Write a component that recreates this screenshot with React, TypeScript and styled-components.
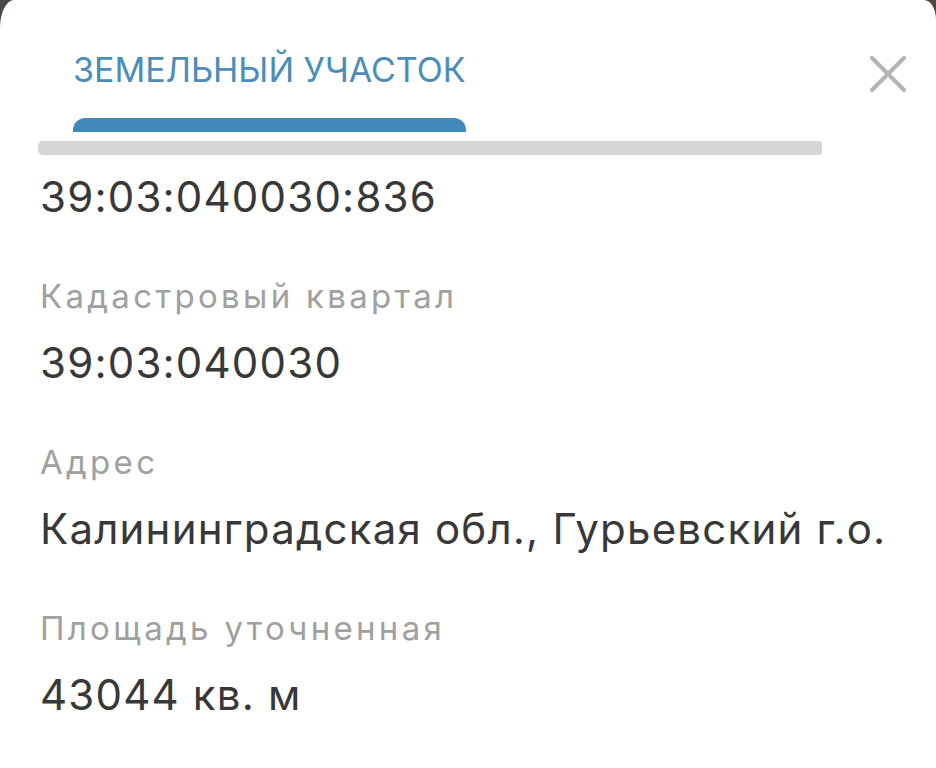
import { FC } from 'react'
import styled, { createGlobalStyle } from 'styled-components'

const GlobalStyle = createGlobalStyle`
  html, body {
    margin: 0;
    padding: 0;
    background: #4d4746;
  }
  body {
    font-family: Inter, "Noto Sans", "Liberation Sans", sans-serif;
    -webkit-font-smoothing: antialiased;
  }
`

const Sheet = styled.div`
  width: 936px;
  height: 768px;
  overflow: hidden;
  background: #fff;
  border-top-left-radius: 14px 28px;
  border-top-right-radius: 12px 20px;
  box-sizing: border-box;
`

const Header = styled.div`
  display: flex;
  align-items: flex-start;
  padding-left: 38px;
`

const TabsColumn = styled.div`
  width: 784px;
  display: flex;
  flex-direction: column;
`

const Tab = styled.div`
  margin-left: 35px;
  width: 393px;
  display: flex;
  flex-direction: column;
`

const TabLabel = styled.span`
  display: block;
  padding-top: 48px;
  font-size: 34px;
  line-height: 44px;
  letter-spacing: 0;
  color: #4b8db8;
  white-space: nowrap;
`

const TabIndicator = styled.div`
  margin-top: 26px;
  height: 14px;
  background: #4189ba;
  border-radius: 12px 12px 0 0;
`

const Track = styled.div`
  margin-top: 9px;
  height: 14px;
  background: #d5d5d5;
  border-radius: 5px 3px 3px 5px;
`

const CloseButton = styled.button`
  margin: 56px 0 0 48px;
  width: 36px;
  height: 36px;
  padding: 0;
  border: none;
  background: transparent;
  display: flex;
  align-items: center;
  justify-content: center;
  cursor: pointer;
`

const Content = styled.div`
  padding: 17px 40px 0;
  display: flex;
  flex-direction: column;
  gap: 54px;
`

const Field = styled.div`
  display: flex;
  flex-direction: column;
  gap: 22px;
`

const Label = styled.div`
  font-size: 33px;
  line-height: 40px;
  color: #a0a0a0;
  letter-spacing: 3.3px;
  white-space: nowrap;
`

const Value = styled.div`
  font-size: 42px;
  line-height: 50px;
  color: #383838;
  letter-spacing: 1.2px;
  white-space: nowrap;
`

const fields = [
  { label: '', value: '39:03:040030:836' },
  { label: 'Кадастровый квартал', value: '39:03:040030' },
  { label: 'Адрес', value: 'Калининградская обл., Гурьевский г.о.' },
  { label: 'Площадь уточненная', value: '43044 кв. м' },
]

const CloseIcon: FC = () => (
  <svg width="36" height="36" viewBox="0 0 36 36">
    <path d="M2 2 L34 34 M34 2 L2 34" stroke="#b4b4b4" strokeWidth="4" strokeLinecap="round" />
  </svg>
)

const App: FC = () => {
  return (
    <>
      <GlobalStyle />
      <Sheet>
        <Header>
          <TabsColumn>
            <Tab>
              <TabLabel>ЗЕМЕЛЬНЫЙ УЧАСТОК</TabLabel>
              <TabIndicator />
            </Tab>
            <Track />
          </TabsColumn>
          <CloseButton aria-label="Закрыть">
            <CloseIcon />
          </CloseButton>
        </Header>
        <Content>
          {fields.map(f => (
            <Field key={f.value}>
              {f.label && <Label>{f.label}</Label>}
              <Value>{f.value}</Value>
            </Field>
          ))}
        </Content>
      </Sheet>
    </>
  )
}

export default App
